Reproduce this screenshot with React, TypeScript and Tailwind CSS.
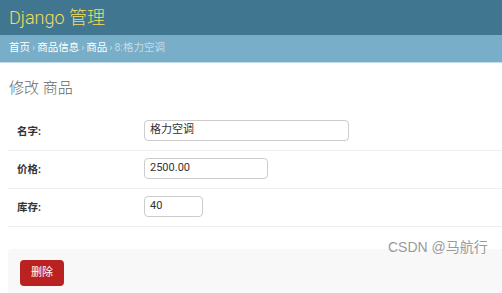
import React from 'react';

const fields = [
  { label: '名字:', value: '格力空调', width: 'w-[205px]' },
  { label: '价格:', value: '2500.00', width: 'w-[124px]' },
  { label: '库存:', value: '40', width: 'w-[59px]' },
];

export default function App() {
  return (
    <div className="relative w-[502px] h-[293px] overflow-hidden bg-white font-['Roboto','Noto_Sans_CJK_SC',sans-serif] text-[#333]">
      {/* header */}
      <div className="h-[35px] bg-[#417690] flex items-center px-[9px]">
        <span className="text-[18px] text-[#f5dd5d] font-light leading-none">Django 管理</span>
      </div>

      {/* breadcrumbs */}
      <div className="h-[28px] bg-[#79aec8] border-b border-[#c4dce8] flex items-center px-[9px] text-[10.5px] leading-none">
        <span className="text-white">首页</span>
        <span className="text-[#c4dce8] mx-[2px]">›</span>
        <span className="text-white">商品信息</span>
        <span className="text-[#c4dce8] mx-[2px]">›</span>
        <span className="text-white">商品</span>
        <span className="text-[#c4dce8] mx-[2px]">›</span>
        <span className="text-[#c4dce8]">8:格力空调</span>
      </div>

      {/* content */}
      <div className="pl-[8px]">
        <h1 className="h-[50px] flex items-center pl-[1px] text-[15px] text-[#666] font-light">修改 商品</h1>

        <div>
          {fields.map((f) => (
            <div key={f.label} className="h-[38px] flex items-center pl-[9px] border-b border-[#eee]">
              <label className="w-[127px] text-[10.5px] font-bold text-[#333]">{f.label}</label>
              <div className={`${f.width} h-[21px] -mt-[2px] border border-[#ccc] rounded-[4px] flex items-center px-[5px] text-[11px] text-[#333]`}>
                {f.value}
              </div>
            </div>
          ))}
        </div>

        <div className="mt-[22px] h-[60px] bg-[#f8f8f8] rounded-tl-[4px] pl-[12px] pt-[10px]">
          <button className="w-[44px] h-[26px] bg-[#ba2121] rounded-[4px] text-white text-[11px]">删除</button>
        </div>
      </div>

      {/* watermark */}
      <div className="absolute left-[388px] top-[237px] text-[14px] text-[#9a9a9a] font-['Liberation_Sans','Noto_Sans_CJK_SC',sans-serif]">
        CSDN @马航行
      </div>
    </div>
  );
}
